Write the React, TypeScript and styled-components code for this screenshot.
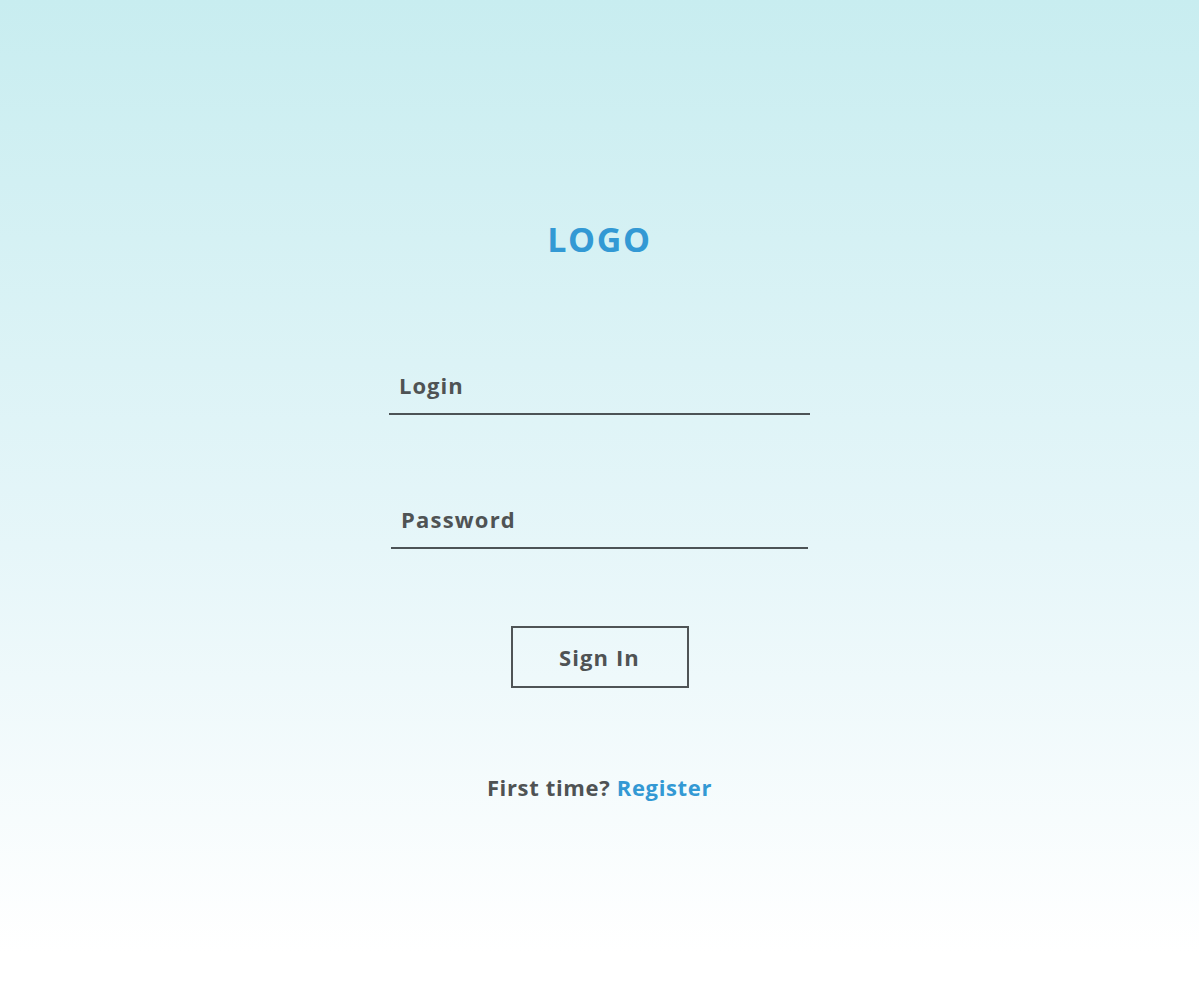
import React from "react";
import styled, { createGlobalStyle } from "styled-components";

const Global = createGlobalStyle`
  html, body { margin: 0; padding: 0; }
  body { font-family: "Open Sans", "Lato", sans-serif; }
`;

const Page = styled.div`
  min-height: 992px;
  background: linear-gradient(180deg, #c8edf0 0%, #e6f6f9 55%, #ffffff 96%);
  display: flex;
  flex-direction: column;
  align-items: center;
  padding-top: 219px;
  box-sizing: border-box;
`;

const Logo = styled.div`
  font-size: 34px;
  line-height: 40px;
  font-weight: 700;
  color: #3399d4;
  letter-spacing: 1.7px;
`;

const Field = styled.label<{ $w: number; $top: number; $spacing: number }>`
  display: flex;
  align-items: center;
  width: ${(p) => p.$w}px;
  height: 51px;
  margin-top: ${(p) => p.$top}px;
  border-bottom: 2px solid #4c5356;
  padding-left: 10px;
  padding-bottom: 7px;
  box-sizing: border-box;
  font-size: 22px;
  font-weight: 700;
  letter-spacing: ${(p) => p.$spacing}px;
  color: #4f5354;
`;

const Button = styled.button`
  margin-top: 77px;
  width: 178px;
  height: 62px;
  background: transparent;
  border: 2px solid #4f5456;
  font-family: inherit;
  font-size: 22px;
  font-weight: 700;
  letter-spacing: 1.1px;
  color: #4f5354;
  cursor: pointer;
`;

const Footer = styled.div`
  margin-top: 84px;
  font-size: 22px;
  font-weight: 700;
  letter-spacing: 0.65px;
  color: #4f5354;
`;

const Link = styled.a`
  color: #3399d4;
  text-decoration: none;
`;

export default function App() {
  return (
    <>
      <Global />
      <Page>
        <Logo>LOGO</Logo>
        <Field $w={421} $top={105} $spacing={1}>Login</Field>
        <Field $w={417} $top={83} $spacing={1.2}>Password</Field>
        <Button>Sign In</Button>
        <Footer>
          First time? <Link href="#">Register</Link>
        </Footer>
      </Page>
    </>
  );
}
